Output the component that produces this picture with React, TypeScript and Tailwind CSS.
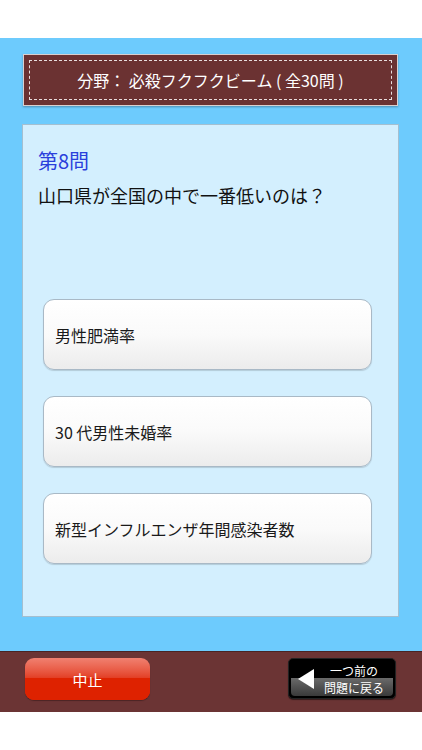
import React from "react";

const font = { fontFamily: '"Noto Sans CJK JP", "Noto Sans", sans-serif' };

function Option({ label }: { label: string }) {
  return (
    <div className="h-[71px] w-[329px] rounded-[11px] border border-[#a9b9c6] bg-gradient-to-b from-white via-[#fafafa] to-[#ececec] flex items-center pl-[11px] shadow-[0_1px_1px_rgba(0,0,0,0.15)]">
      <span className="text-[16px] text-[#1a1a1a] leading-none">{label}</span>
    </div>
  );
}

export default function App() {
  return (
    <div className="w-[422px] h-[750px] bg-white flex flex-col" style={font}>
      <div className="h-[38px] bg-white" />
      <div className="h-[613px] bg-[#6dcbfd] flex flex-col pt-[16px]">
        <div className="ml-[23px] w-[375px] h-[52px] bg-[#6b3232] border border-[#d9d0d0] shadow-[0_1px_2px_rgba(0,0,0,0.3)] p-[5px]">
          <div className="w-full h-full border-[1.5px] border-dashed border-[#e8dede] flex items-center justify-center">
            <span className="text-[16px] text-white leading-none">
              分野： 必殺フクフクビーム ( 全30問 )
            </span>
          </div>
        </div>
        <div className="mt-[18px] ml-[22px] w-[377px] h-[493px] bg-[#d3effe] border border-[#a4bfd0] flex flex-col pl-[20px]">
          <div className="pt-[26px]">
            <div className="h-[19px] flex items-center text-[20px] text-[#2a40dc] leading-none -ml-[5px]">第8問</div>
            <div className="mt-[16px] h-[17px] flex items-center text-[18px] text-[#111] leading-none -ml-[5px]">
              山口県が全国の中で一番低いのは？
            </div>
          </div>
          <div className="mt-[96px] flex flex-col gap-[26px]">
            <Option label="男性肥満率" />
            <Option label="30 代男性未婚率" />
            <Option label="新型インフルエンザ年間感染者数" />
          </div>
        </div>
      </div>
      <div className="h-[61px] bg-[#6b3434] border-t border-[#4a2424] flex items-start justify-between pl-[25px] pr-[26px] pt-[6px]">
        <div className="w-[125px] h-[42px] rounded-[9px] bg-gradient-to-b from-[#f08070] via-[#e23a1e] to-[#dd2000] flex items-center justify-center shadow-[0_1px_1px_rgba(0,0,0,0.3)] relative overflow-hidden">
          <div className="absolute left-0 right-0 bottom-0 h-[22px] bg-[#de2200]" />
          <span className="relative text-[15px] text-white leading-none">中止</span>
        </div>
        <div className="w-[108px] h-[41px] rounded-[5px] bg-black border border-[#222] flex items-center relative overflow-hidden shadow-[0_1px_1px_rgba(0,0,0,0.5)]">
          <div className="absolute left-[2px] right-[2px] bottom-[2px] h-[18px] rounded-b-[4px] bg-gradient-to-b from-[#6a6a6a] to-[#3a3a3a]" />
          <svg className="relative ml-[8px]" width="18" height="22" viewBox="0 0 18 22">
            <polygon points="17,1 17,21 1,11" fill="white" />
          </svg>
          <div className="relative ml-[9px] flex flex-col items-center text-white text-[12px] leading-[17px]">
            <span>一つ前の</span>
            <span>問題に戻る</span>
          </div>
        </div>
      </div>
      <div className="flex-1 bg-white" />
    </div>
  );
}
